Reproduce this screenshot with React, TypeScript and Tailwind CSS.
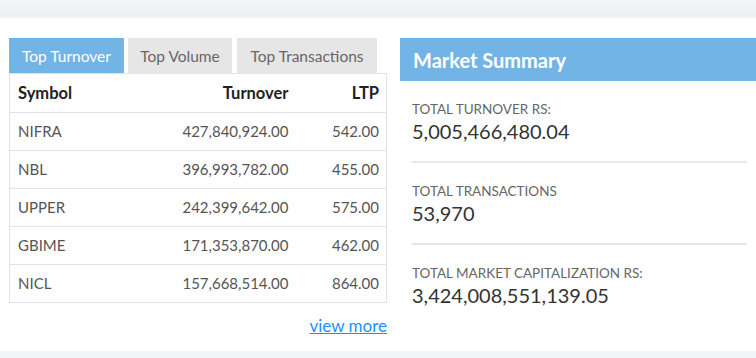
const rows = [
  { symbol: "NIFRA", turnover: "427,840,924.00", ltp: "542.00" },
  { symbol: "NBL", turnover: "396,993,782.00", ltp: "455.00" },
  { symbol: "UPPER", turnover: "242,399,642.00", ltp: "575.00" },
  { symbol: "GBIME", turnover: "171,353,870.00", ltp: "462.00" },
  { symbol: "NICL", turnover: "157,668,514.00", ltp: "864.00" },
];

const summary = [
  { label: "TOTAL TURNOVER RS:", value: "5,005,466,480.04" },
  { label: "TOTAL TRANSACTIONS", value: "53,970" },
  { label: "TOTAL MARKET CAPITALIZATION RS:", value: "3,424,008,551,139.05" },
];

export default function App() {
  return (
    <div className="h-[358px] w-[756px] overflow-hidden bg-white font-['Lato',sans-serif]">
      <div className="h-[18px] bg-gradient-to-b from-[#f4f5f8] to-[#eeeff3]" />
      <div className="flex h-[333px] gap-[13px] pl-[9px] pt-[20px]">
        <div className="w-[378px] shrink-0">
          <div className="flex text-[15.5px]">
            <div className="flex h-[35px] w-[115px] items-center justify-center pt-[2px] bg-[#72b4e6] text-white">Top Turnover</div>
            <div className="ml-[4px] flex h-[35px] w-[104px] items-center justify-center pt-[2px] bg-[#e6e6e6] text-[#666]">Top Volume</div>
            <div className="ml-[5px] flex h-[35px] w-[140px] items-center justify-center pt-[2px] bg-[#e6e6e6] text-[#666]">Top Transactions</div>
          </div>
          <table className="w-full border border-[#e2e2e8] text-[15px]">
            <thead>
              <tr className="h-[39px] border-b border-[#e2e2e8] text-[16.5px] text-[#222]">
                <th className="pl-[8px] text-left font-bold">Symbol</th>
                <th className="text-right font-bold">Turnover</th>
                <th className="pr-[7px] text-right font-bold">LTP</th>
              </tr>
            </thead>
            <tbody>
              {rows.map((r, i) => (
                <tr key={r.symbol} className={`h-[38px] text-[#555] ${i < rows.length - 1 ? "border-b border-[#e2e2e8]" : ""}`}>
                  <td className="pl-[8px]">{r.symbol}</td>
                  <td className="text-right">{r.turnover}</td>
                  <td className="w-[98px] pr-[7px] text-right">{r.ltp}</td>
                </tr>
              ))}
            </tbody>
          </table>
          <div className="mt-[10px] flex justify-end">
            <a href="#" className="text-[17px] text-[#1e8fff] underline">view more</a>
          </div>
        </div>
        <div className="flex-1">
          <div className="flex h-[43px] items-center bg-[#72b4e6] pl-[13px] text-[20px] font-bold text-white">
            Market Summary
          </div>
          <div className="pl-[12px] pr-[9px]">
            {summary.map((s, i) => (
              <div key={s.label} className={`pb-[18px] pt-[20px] ${i < summary.length - 1 ? "border-b-2 border-[#e8e8e8]" : ""}`}>
                <div className="text-[13.5px] leading-[16px] text-[#666]">{s.label}</div>
                <div className="mt-[2px] text-[20px] leading-[24px] text-[#333]">{s.value}</div>
              </div>
            ))}
          </div>
        </div>
      </div>
      <div className="h-[7px] bg-[#f2f3f6]" />
    </div>
  );
}
